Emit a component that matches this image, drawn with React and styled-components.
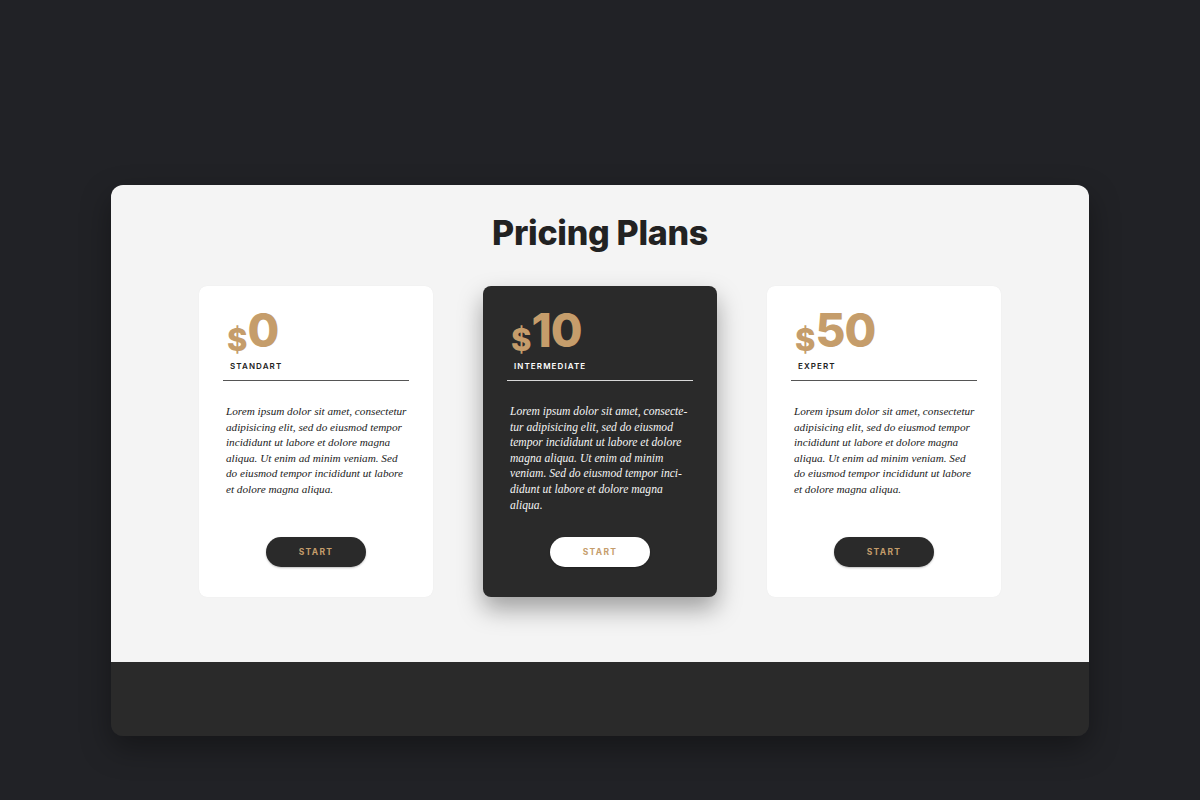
import React from 'react';
import styled, { createGlobalStyle } from 'styled-components';

const GlobalStyle = createGlobalStyle`
    html, body {
        margin: 0;
        padding: 0;
        background: #212226;
    }
    body {
        font-family: 'Inter', 'Liberation Sans', sans-serif;
        width: 1200px;
        height: 800px;
        overflow: hidden;
    }
`;

const LOREM =
    'Lorem ipsum dolor sit amet, consectetur adipisicing elit, sed do eiusmod tempor incididunt ut labore et dolore magna aliqua. Ut enim ad minim veniam. Sed do eiusmod tempor incididunt ut labore et dolore magna aliqua.';

const LOREM_SOFT =
    'Lorem ipsum dolor sit amet, consecte\u00ADtur adipisicing elit, sed do eiusmod tempor incididunt ut labore et dolore magna aliqua. Ut enim ad minim veniam. Sed do eiusmod tempor inci\u00ADdidunt ut labore et dolore magna aliqua.';

const plans = [
    { price: '0', name: 'STANDART', text: LOREM, dark: false },
    { price: '10', name: 'INTERMEDIATE', text: LOREM_SOFT, dark: true },
    { price: '50', name: 'EXPERT', text: LOREM, dark: false },
];

const App = () => {
    return (
        <Page>
            <GlobalStyle />
            <Panel>
                <Content>
                    <Title>Pricing Plans</Title>
                    <CardRow>
                        {plans.map(plan => (
                            <Card key={plan.name} dark={plan.dark}>
                                <Price>
                                    <Dollar>$</Dollar>
                                    <Amount>{plan.price}</Amount>
                                </Price>
                                <PlanName dark={plan.dark}>{plan.name}</PlanName>
                                <Divider dark={plan.dark} />
                                <Body dark={plan.dark}>{plan.text}</Body>
                                <StartBtn dark={plan.dark}>START</StartBtn>
                            </Card>
                        ))}
                    </CardRow>
                </Content>
                <Footer />
            </Panel>
        </Page>
    );
};

const Page = styled.div`
    width: 1200px;
    height: 800px;
    padding-top: 185px;
    box-sizing: border-box;
    display: flex;
    justify-content: center;
`;

const Panel = styled.div`
    width: 978px;
    height: 551px;
    border-radius: 12px;
    overflow: hidden;
    display: flex;
    flex-direction: column;
    box-shadow: 0 12px 30px rgba(0, 0, 0, 0.35);
`;

const Content = styled.div`
    height: 477px;
    background: #f4f4f4;
    display: flex;
    flex-direction: column;
    align-items: center;
    padding-top: 31px;
    box-sizing: border-box;
`;

const Title = styled.h1`
    margin: 0;
    font-family: 'Inter', 'Liberation Sans', sans-serif;
    font-weight: 800;
    font-size: 34px;
    line-height: 1;
    color: #222222;
    letter-spacing: -0.3px;
`;

const CardRow = styled.div`
    margin-top: 36px;
    display: flex;
    gap: 50px;
`;

const Card = styled.div`
    width: 234px;
    height: 311px;
    box-sizing: border-box;
    padding: 21px 24px 30px;
    border-radius: 8px;
    display: flex;
    flex-direction: column;
    background: ${p => (p.dark ? '#2a2a2a' : '#ffffff')};
    box-shadow: ${p => (p.dark ? '0 12px 24px rgba(0, 0, 0, 0.35)' : '0 0 1px rgba(0, 0, 0, 0.08)')};
`;

const Price = styled.div`
    display: flex;
    align-items: baseline;
    padding-left: 4px;
    color: #c59d6b;
    font-family: 'Inter', 'Liberation Sans', sans-serif;
    font-weight: 800;
    line-height: 1;
`;

const Dollar = styled.span`
    font-size: 31px;
    position: relative;
    top: 4px;
`;

const Amount = styled.span`
    font-size: 46px;
    letter-spacing: -1px;
`;

const PlanName = styled.div`
    margin-top: 8px;
    padding-left: 7px;
    font-size: 8px;
    font-weight: 600;
    letter-spacing: 1.1px;
    color: ${p => (p.dark ? '#ffffff' : '#222222')};
`;

const Divider = styled.div`
    margin-top: 9px;
    height: 1px;
    background: ${p => (p.dark ? '#d8d8d8' : '#555555')};
`;

const Body = styled.p`
    margin: 23px 0 0;
    padding: ${p => (p.dark ? '0 4px 0 3px' : '0 0 0 3px')};
    font-family: 'Liberation Serif', 'DejaVu Serif', serif;
    font-style: italic;
    font-size: ${p => (p.dark ? '11.6px' : '11.2px')};
    line-height: 15.6px;
    hyphens: manual;
    color: ${p => (p.dark ? '#f4f4f4' : '#222222')};
`;

const StartBtn = styled.button`
    margin: auto auto 0;
    width: 100px;
    height: 30px;
    border-radius: 15px;
    border: none;
    font-family: 'Inter', 'Liberation Sans', sans-serif;
    font-size: 8.5px;
    font-weight: 700;
    letter-spacing: 1.3px;
    color: #c59d6b;
    background: ${p => (p.dark ? '#ffffff' : '#2a2a2a')};
    box-shadow: 0 1px 2px rgba(0, 0, 0, 0.25);
    cursor: pointer;
`;

const Footer = styled.div`
    flex: 1;
    background: #2a2a2a;
`;

export default App;
